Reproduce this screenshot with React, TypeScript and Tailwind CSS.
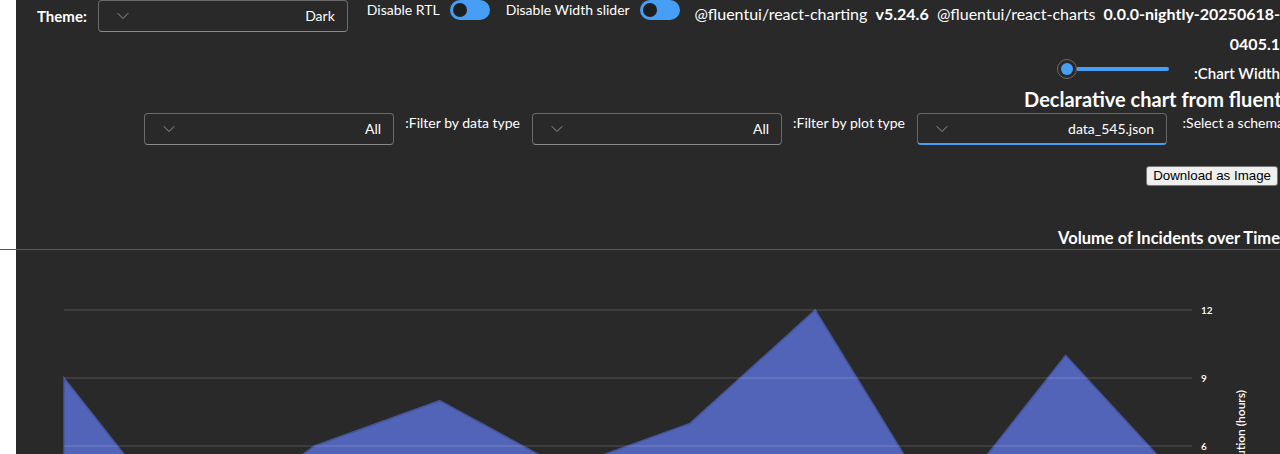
import { ChevronDown } from "lucide-react";

const points = [9, 2, 6, 8, 5, 7, 12, 3, 10, 4];

const yOf = (v: number) => 310 + (12 - v) * 22.67;
const xOf = (i: number) => 64 + i * 125.2;

const Dropdown = ({ value, focused }: { value: string; focused?: boolean }) => {
  return (
    <div
      dir="rtl"
      className={
        focused
          ? "flex h-8 w-[250px] shrink-0 items-center justify-between rounded border border-[#666] border-b-2 border-b-[#479ef5] bg-[#292929] pl-[14px] pr-3 text-sm text-white"
          : "flex h-8 w-[250px] shrink-0 items-center justify-between rounded border border-[#6b6b6b] border-b-[#8a8a8a] bg-[#292929] pl-[14px] pr-3 text-sm text-white"
      }
    >
      <span>{value}</span>
      <ChevronDown size={20} strokeWidth={1} className="text-[#adadad]" />
    </div>
  );
};

const Toggle = () => (
  <div className="flex h-5 w-10 shrink-0 items-center rounded-full bg-[#479ef5] px-[3px]">
    <div className="h-[14px] w-[14px] rounded-full bg-[#1f1f1f]" />
  </div>
);

const AreaChart = () => {
  const line = points.map((v, i) => `${xOf(i)},${yOf(v)}`).join(" L");
  const area = `M${line} L${xOf(9)},582 L64,582 Z`;
  return (
    <svg width={1264} height={204} viewBox="16 250 1264 204" className="block">
      <path d={area} fill="#637cef" fillOpacity={0.72} stroke="#44559c" strokeWidth={1.5} />
      {[12, 9, 6].map((t) => (
        <g key={t}>
          <line x1={64} x2={1192} y1={yOf(t)} y2={yOf(t)} stroke="rgba(255,255,255,0.2)" strokeWidth={1} />
          <text x={1201} y={yOf(t) + 3.5} fill="#fff" fontSize={10} fontWeight={600}>
            {t}
          </text>
        </g>
      ))}
      <text
        transform="translate(1245 390) rotate(-90)"
        textAnchor="end"
        fill="#fff"
        fontSize={12}
        fontWeight={600}
      >
        Time to Resolution (hours)
      </text>
    </svg>
  );
};

export default function App() {
  return (
    <div className="h-[454px] w-[1280px] overflow-hidden bg-white font-[Lato,sans-serif] text-white">
      <div className="ml-4 h-[249px] overflow-hidden bg-[#292929]">
        <div className="flex items-start pl-[21px]">
          <div className="flex shrink-0 items-center gap-[11px]">
            <span className="text-[15px] font-bold">Theme:</span>
            <Dropdown value="Dark" />
          </div>
          <div className="ml-[19px] flex h-5 shrink-0 items-center gap-[10px] text-sm">
            <span>Disable RTL</span>
            <Toggle />
          </div>
          <div className="ml-4 flex h-5 shrink-0 items-center gap-[10px] text-sm">
            <span>Disable Width slider</span>
            <Toggle />
          </div>
          <div className="-mt-px ml-3 min-w-0 flex-1 whitespace-nowrap text-right text-base leading-[30px]">
            @fluentui/react-charting&nbsp;&nbsp;<b>v5.24.6</b>&nbsp;&nbsp;@fluentui/react-charts&nbsp;&nbsp;
            <b>0.0.0-nightly-20250618-</b>
            <br />
            <b>0405.1</b>
          </div>
        </div>

        <div className="flex h-5 items-start justify-end gap-[18px]">
          <div className="flex h-5 w-[112px] items-center">
            <div className="flex h-5 w-5 items-center justify-center rounded-full border border-[#6b6b6b] bg-[#292929]">
              <div className="h-3 w-3 rounded-full bg-[#479ef5]" />
            </div>
            <div className="h-1 flex-1 rounded-r bg-[#479ef5]" />
          </div>
          <span className="mt-1 w-[93px] whitespace-nowrap text-[15px] font-semibold leading-5" dir="rtl">
            Chart Width:
          </span>
        </div>

        <div className="mt-[6px] flex justify-end">
          <h1 className="-mr-[18px] whitespace-nowrap text-xl font-bold leading-7">
            Declarative chart from fluentui
          </h1>
        </div>

        <div dir="rtl" className="-mr-1 flex items-start gap-3 text-sm">
          <span className="w-[105px] shrink-0 whitespace-nowrap leading-5">Select a schema:</span>
          <Dropdown value="data_545.json" focused />
          <span className="w-[111px] shrink-0 whitespace-nowrap leading-5">Filter by plot type:</span>
          <Dropdown value="All" />
          <span className="w-[114px] shrink-0 whitespace-nowrap leading-5">Filter by data type:</span>
          <Dropdown value="All" />
        </div>

        <div className="mt-[21px] flex justify-end pr-[2px]">
          <button className="h-5 rounded-[3px] border border-[#767676] bg-[#efefef] px-[6px] font-[Liberation_Sans,Arial,sans-serif] text-[13.33px] leading-none text-black">
            Download as Image
          </button>
        </div>

        <div className="mt-[42px] flex justify-end">
          <span className="whitespace-nowrap text-[16.5px] font-bold leading-5">Volume of Incidents over Time</span>
        </div>
      </div>
      <div className="h-px bg-[#575757]" />
      <div className="ml-4 h-[204px] bg-[#292929]">
        <AreaChart />
      </div>
    </div>
  );
}
